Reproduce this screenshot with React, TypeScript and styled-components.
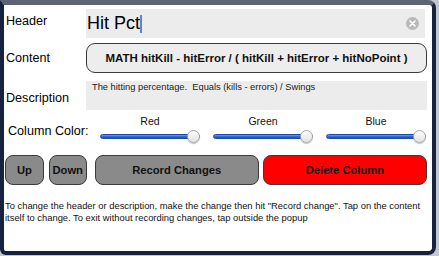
import React from "react";
import styled, { createGlobalStyle } from "styled-components";

const Global = createGlobalStyle`
  html, body { margin: 0; padding: 0; }
  body {
    background: #c3c7cf;
    font-family: "Liberation Sans", Arial, sans-serif;
    width: 439px;
    height: 256px;
    overflow: hidden;
  }
`;

const Frame = styled.div`
  box-sizing: border-box;
  width: 436px;
  height: 255px;
  border: 4px solid #16233f;
  border-top: 5px solid #5d6474;
  border-radius: 0 8px 8px 6px;
  background: #fff;
  overflow: hidden;
`;

const Panel = styled.div`
  display: flex;
  flex-direction: column;
  padding: 4px 5px 0 1px;
  background: #fff;
  border-radius: 4px;
  height: 100%;
  box-sizing: border-box;
`;

const FieldRow = styled.div<{ $h: number; $mt?: number }>`
  display: grid;
  grid-template-columns: 81px 1fr;
  align-items: center;
  height: ${(p) => p.$h}px;
  margin-top: ${(p) => p.$mt ?? 0}px;
`;

const Label = styled.div<{ $dy?: number }>`
  font-size: 12.6px;
  color: #000;
  padding-left: 1px;
  position: relative;
  top: ${(p) => p.$dy ?? 0}px;
`;

const HeaderInput = styled.div`
  height: 29px;
  background: #ececec;
  display: flex;
  align-items: center;
  padding-left: 1px;
  margin-right: 2px;
  font-size: 18px;
  color: #000;
`;

const Caret = styled.span`
  display: inline-block;
  width: 2px;
  height: 18px;
  background: #5b84d6;
`;

const Clear = styled.div`
  margin-left: auto;
  margin-right: 6px;
  width: 13px;
  height: 13px;
  border-radius: 50%;
  background: #b9b9b9;
  display: flex;
  align-items: center;
  justify-content: center;
`;

const ContentButton = styled.div`
  box-sizing: border-box;
  height: 30px;
  border: 1px solid #3a3a3a;
  border-radius: 9px;
  background: #ededed;
  display: flex;
  align-items: center;
  justify-content: center;
  font-weight: bold;
  font-size: 11.5px;
  color: #111;
`;

const DescBox = styled.div`
  height: 29px;
  background: #ececec;
  box-sizing: border-box;
  padding: 1px 6px;
  font-size: 9.3px;
  color: #222;
  white-space: pre;
`;

const ColorRow = styled.div`
  display: flex;
  align-items: flex-end;
  margin-top: 5px;
  height: 30px;
`;

const ColorLabel = styled.div`
  font-size: 12.6px;
  width: 95px;
  padding-left: 3px;
  box-sizing: border-box;
  margin-bottom: 7px;
`;

const Sliders = styled.div`
  display: flex;
  gap: 13px;
  flex: 1;
`;

const SliderBox = styled.div`
  width: 100px;
  display: flex;
  flex-direction: column;
  align-items: center;
`;

const SliderName = styled.div`
  font-size: 10.5px;
  color: #111;
  height: 13px;
  line-height: 13px;
`;

const Track = styled.div`
  position: relative;
  width: 100%;
  height: 17px;
  display: flex;
  align-items: center;
`;

const Bar = styled.div`
  width: 100%;
  height: 5px;
  border-radius: 3px;
  border: 1px solid #1f4aa6;
  background: linear-gradient(#6d9de8, #2a62cc 60%, #1d4fb4);
  box-sizing: border-box;
`;

const Thumb = styled.div`
  position: absolute;
  top: 2px;
  width: 13px;
  height: 13px;
  border-radius: 50%;
  box-sizing: border-box;
  border: 1px solid #a8a8a8;
  background: linear-gradient(#fdfdfd, #e2e2e2);
  box-shadow: 0 1px 1px rgba(0, 0, 0, 0.25);
`;

const ButtonRow = styled.div`
  display: flex;
  margin-top: 10px;
`;

const Btn = styled.div<{ $w: number; $ml: number; $red?: boolean }>`
  box-sizing: border-box;
  width: ${(p) => p.$w}px;
  margin-left: ${(p) => p.$ml}px;
  height: 30px;
  border: 1px solid #3b3b3b;
  border-radius: 8px;
  background: ${(p) => (p.$red ? "#ff0000" : "#8a8a8a")};
  display: flex;
  align-items: center;
  justify-content: center;
  font-weight: bold;
  font-size: 11.2px;
  color: #111;
`;

const Help = styled.div`
  margin-top: 15px;
  font-size: 9.4px;
  line-height: 12px;
  color: #111;
  white-space: nowrap;
`;

const sliders = [
  { name: "Red", value: 1 },
  { name: "Green", value: 1 },
  { name: "Blue", value: 1 },
];

export default function App() {
  return (
    <>
      <Global />
      <Frame>
        <Panel>
          <FieldRow $h={29}>
            <Label $dy={-3}>Header</Label>
            <HeaderInput>
              Hit Pct
              <Caret />
              <Clear>
                <svg width="7" height="7" viewBox="0 0 7 7">
                  <path d="M1 1L6 6M6 1L1 6" stroke="#fff" strokeWidth="1.6" strokeLinecap="round" />
                </svg>
              </Clear>
            </HeaderInput>
          </FieldRow>
          <FieldRow $h={30} $mt={5}>
            <Label $dy={0}>Content</Label>
            <ContentButton>MATH hitKill - hitError / ( hitKill + hitError + hitNoPoint )</ContentButton>
          </FieldRow>
          <FieldRow $h={29} $mt={8}>
            <Label $dy={2}>Description</Label>
            <DescBox>{"The hitting percentage.  Equals (kills - errors) / Swings"}</DescBox>
          </FieldRow>
          <ColorRow>
            <ColorLabel>Column Color:</ColorLabel>
            <Sliders>
              {sliders.map((s) => (
                <SliderBox key={s.name}>
                  <SliderName>{s.name}</SliderName>
                  <Track>
                    <Bar />
                    <Thumb style={{ left: `calc(${s.value * 100}% - 13px)` }} />
                  </Track>
                </SliderBox>
              ))}
            </Sliders>
          </ColorRow>
          <ButtonRow>
            <Btn $w={39} $ml={0}>Up</Btn>
            <Btn $w={38} $ml={5}>Down</Btn>
            <Btn $w={165} $ml={8}>Record Changes</Btn>
            <Btn $w={165} $ml={4} $red>Delete Column</Btn>
          </ButtonRow>
          <Help>
            To change the header or description, make the change then hit "Record change". Tap on the content
            <br />
            itself to change. To exit without recording changes, tap outside the popup
          </Help>
        </Panel>
      </Frame>
    </>
  );
}
